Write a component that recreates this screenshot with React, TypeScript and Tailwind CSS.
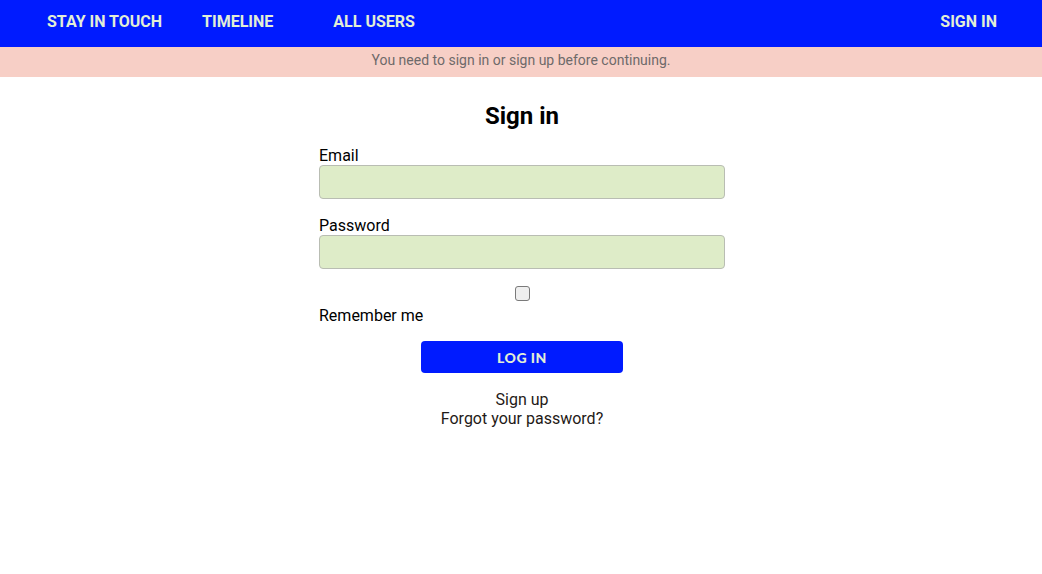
import React from "react";

const navLinks = [
  { label: "STAY IN TOUCH", className: "" },
  { label: "TIMELINE", className: "ml-[40px]" },
  { label: "ALL USERS", className: "ml-[60px]" },
];

const App = () => {
  return (
    <div className="min-h-[574px] bg-white font-['Roboto',sans-serif]">
      <nav className="flex h-[47px] items-center justify-between bg-[#001bff] pb-[4px] pl-[47px] pr-[45px]">
        <div className="flex items-center">
          {navLinks.map((link) => (
            <a
              key={link.label}
              href="#"
              className={`text-[16px] font-bold leading-[19px] text-[#e2eed6] ${link.className}`}
            >
              {link.label}
            </a>
          ))}
        </div>
        <a href="#" className="text-[16px] font-bold leading-[19px] text-[#e2eed6]">
          SIGN IN
        </a>
      </nav>

      <div className="flex h-[30px] items-center justify-center bg-[#f7cfc6] pb-[4px] text-[14px] text-[#6e6a6a]">
        You need to sign in or sign up before continuing.
      </div>

      <div className="mx-auto w-[408px] pl-[2px] pt-[25px]">
        <h2 className="text-center text-[24px] font-bold leading-[28px] text-black">Sign in</h2>

        <form className="mt-[16px]">
          <label className="block text-[16px] leading-[19px] text-black">Email</label>
          <input
            type="email"
            className="block h-[34px] w-full rounded-[4px] border border-[#b9bdb3] bg-[#deecc8]"
          />

          <label className="mt-[17px] block text-[16px] leading-[19px] text-black">Password</label>
          <input
            type="password"
            className="block h-[34px] w-full rounded-[4px] border border-[#b9bdb3] bg-[#deecc8]"
          />

          <input
            type="checkbox"
            className="mx-auto mt-[17px] block h-[15px] w-[15px] appearance-none rounded-[3px] border border-[#7a7a7a] bg-[#efefef]"
          />
          <label className="mt-[5px] block text-[16px] leading-[19px] text-black">Remember me</label>

          <button
            type="button"
            className="mx-auto mt-[16px] block h-[32px] w-[202px] rounded-[4px] bg-[#001bff] font-['Lato',sans-serif] text-[14px] font-black tracking-[0.5px] text-[#e2eed6]"
          >
            LOG IN
          </button>
        </form>

        <div className="mt-[17px] text-center text-[16px] leading-[19px] text-[#1f1a17]">
          <a href="#" className="block">Sign up</a>
          <a href="#" className="block">Forgot your password?</a>
        </div>
      </div>
    </div>
  );
};

export default App;
